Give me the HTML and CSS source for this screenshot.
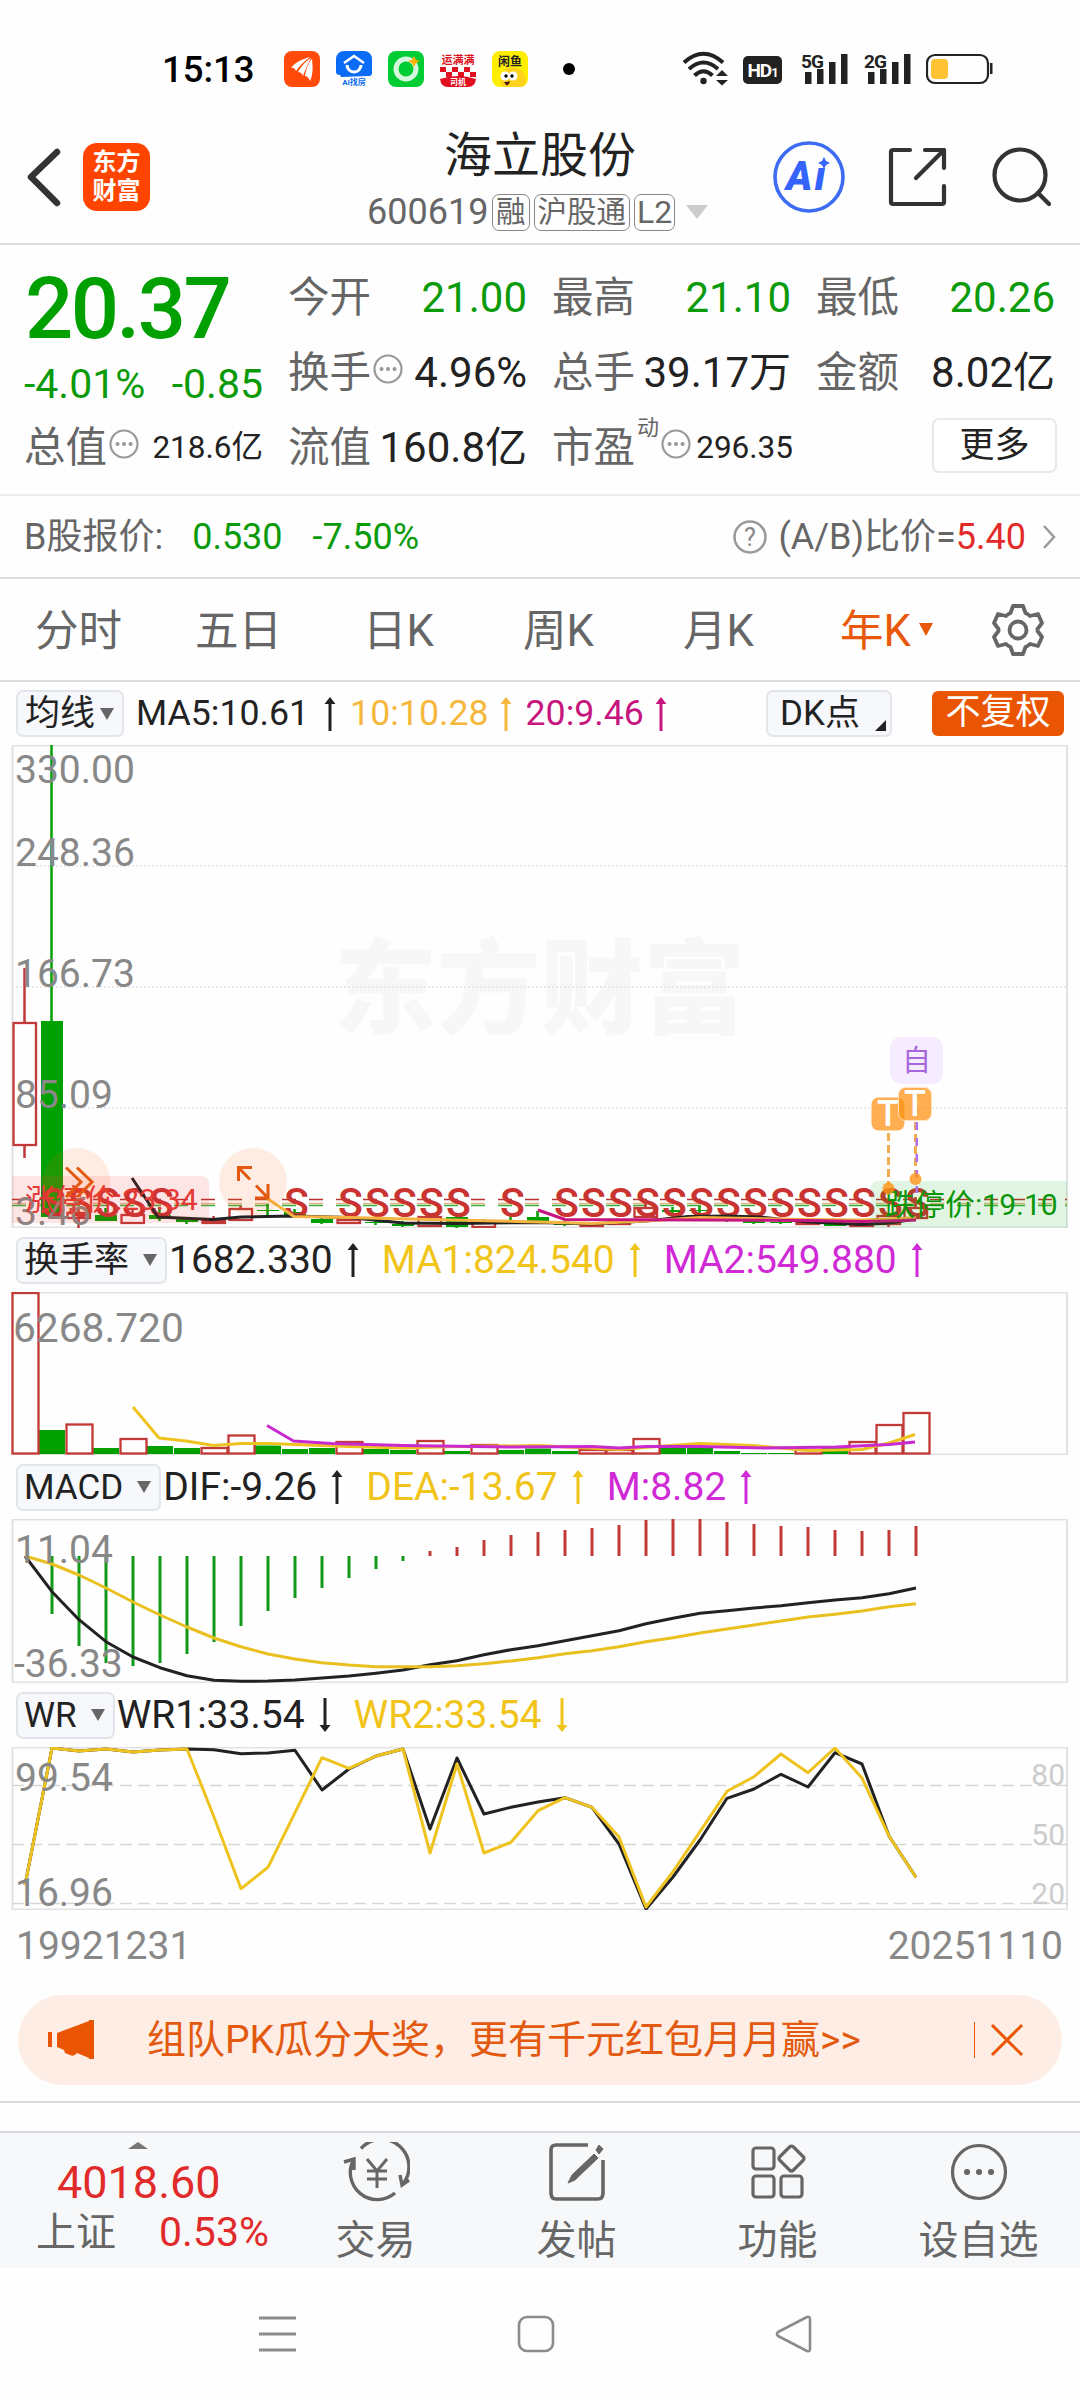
FILE: index.html
```html
<!DOCTYPE html>
<html lang="zh-CN">

<head>
    <meta charset="UTF-8">
    <meta name="viewport" content="width=device-width, initial-scale=1.0">
    <title>海立股份 600619</title>
    <link rel="stylesheet" href="styles.css">
</head>

<body>

    <!-- Status bar -->
    <div class="status-bar">
        <span class="time">15:13</span>
        <div class="app-icons">
            <svg width="36" height="36" viewBox="0 0 36 36">
                <rect width="36" height="36" rx="8" fill="#ff4a0a"/>
                <path d="M7 17C11 11 19 8 26 6C20 11 15 15 12 20C11 17 9 16 7 17Z" fill="#fff"/>
                <path d="M14 21C17 15 22 10 27 7C24 13 21 19 19 25C18 22 16 21 14 21Z" fill="#fff"/>
                <path d="M21 25C22 18 25 11 28 8C29 16 29 24 26 30C25 27 23 25 21 25Z" fill="#fff"/>
            </svg>
            <svg width="36" height="36" viewBox="0 0 36 36">
                <path d="M8 0H28A8 8 0 0 1 36 8V22Q36 25 33 25L5 26L4 24Q0 24 0 21V8A8 8 0 0 1 8 0Z" fill="#0a6cf5"/>
                <path d="M8 12L18 5L28 12" fill="none" stroke="#fff" stroke-width="2.500"/>
                <path d="M11 14A7 7 0 0 0 25 14" fill="none" stroke="#fff" stroke-width="3"/>
                <text x="18" y="34" class="tiny blue">AI找房</text>
            </svg>
            <svg width="36" height="36" viewBox="0 0 36 36">
                <rect width="36" height="36" rx="8" fill="#0c3"/>
                <circle cx="18" cy="18" r="10" fill="none" stroke="#d5f7dd" stroke-width="5"/>
                <path d="M26 5L28 9L32 10L28 12L26 16L24 12L20 10L24 9Z" fill="#ffb000"/>
            </svg>
            <svg width="36" height="36" viewBox="0 0 36 36">
                <text x="18" y="13" class="tiny app-name">运满满</text>
                <path d="M0 16H6V21H0ZM12 16H18V21H12ZM24 16H30V21H24ZM6 21H12V26H6ZM18 21H24V26H18ZM30 21H36V26H30Z" fill="#e01020"/>
                <path d="M0 28Q18 22 36 28Q35 36 28 36H8Q1 36 0 28Z" fill="#e01020"/>
                <text x="18" y="34" class="tiny white">司机</text>
            </svg>
            <svg width="36" height="36" viewBox="0 0 36 36">
                <rect width="36" height="36" rx="8" fill="#ffee00"/>
                <path d="M9 33Q7 20 17 17Q30 14 34 27V29Q34 36 28 36H14Q10 36 9 33Z" fill="#ffd21c"/>
                <text x="18" y="15" class="tiny fish">闲鱼</text>
                <circle cx="13" cy="25" r="4.500" fill="#fff"/>
                <circle cx="21" cy="25" r="4.500" fill="#fff"/>
                <circle cx="14" cy="25" r="1.700"/>
                <circle cx="20" cy="25" r="1.700"/>
                <path d="M12 31Q16 31 18 30Q17 35 14 34Z" fill="#4b1a10"/>
            </svg>
        </div>
        <span class="dot"></span>
        <div class="signals">
            <svg class="wifi" width="46" height="36" viewBox="0 0 46 36" fill="none" stroke="#222" stroke-width="4">
                <path d="M1 11.500Q20.500 -6 40 11.500"/>
                <path d="M6 18Q20.500 5 35 18"/>
                <path d="M11.500 24.500Q20.500 16 29.500 24.500"/>
                <circle cx="20.500" cy="30" r="3.200" fill="#222" stroke="none"/>
                <path d="M33 25L39 19L45 25ZM33 29L39 34.500L45 29Z" fill="#222" stroke="none"/>
            </svg>
            <span class="hd">HD<small>1</small></span>
            <svg width="48" height="36" viewBox="0 0 48 36" fill="#222">
                <text x="0" y="17" class="net">5G</text>
                <rect x="4" y="21" width="6.500" height="12"/>
                <rect x="16" y="18" width="6.500" height="15"/>
                <rect x="28" y="11" width="6.500" height="22"/>
                <rect x="40" y="3" width="6.500" height="30"/>
            </svg>
            <svg width="48" height="36" viewBox="0 0 48 36" fill="#222">
                <text x="0" y="17" class="net">2G</text>
                <rect x="4" y="21" width="6.500" height="12"/>
                <rect x="16" y="18" width="6.500" height="15"/>
                <rect x="28" y="11" width="6.500" height="22"/>
                <rect x="40" y="3" width="6.500" height="30"/>
            </svg>
            <svg width="68" height="36" viewBox="0 0 68 36">
                <rect x="1" y="4" width="61" height="28" rx="8" fill="none" stroke="#222" stroke-width="2.200"/>
                <rect x="5" y="8" width="17" height="20" rx="4" fill="#ffc233"/>
                <rect x="64" y="12" width="2.500" height="11" fill="#222"/>
            </svg>
        </div>
    </div>

    <!-- Title bar -->
    <header class="header">
        <svg class="back" width="36" height="60" viewBox="0 0 36 60" fill="none" stroke="#333" stroke-width="6.500" stroke-linecap="round" stroke-linejoin="round">
            <path d="M31 5L5 30L31 56"/>
        </svg>
        <div class="logo">东方<br>财富</div>
        <div class="title">
            <h1>海立股份</h1>
            <div class="code">
                <span>600619</span>
                <em>融</em><em>沪股通</em><em>L2</em>
                <i class="tri-grey"></i>
            </div>
        </div>
        <div class="header-actions">
            <svg width="72" height="72" viewBox="0 0 72 72">
                <circle cx="36" cy="36" r="34" fill="none" stroke="#3d6bf3" stroke-width="3.600"/>
                <text x="13" y="49" class="ai-text">Aı</text>
                <path d="M51 16L53 20L57 22L53 24L51 28L49 24L45 22L49 20Z" fill="#3464fb"/>
            </svg>
            <svg width="60" height="60" viewBox="0 0 60 60" fill="none" stroke="#333" stroke-width="4.200" stroke-linecap="round" stroke-linejoin="round">
                <path d="M22 3H5Q3 3 3 5V55Q3 57 5 57H54Q56 57 56 55V39"/>
                <path d="M37 3H56V21M56 3L28 31"/>
            </svg>
            <svg width="60" height="60" viewBox="0 0 60 60" fill="none" stroke="#333" stroke-width="4.200" stroke-linecap="round">
                <circle cx="28" cy="28" r="25.500"/>
                <path d="M46 46L57 57"/>
            </svg>
        </div>
    </header>

    <!-- Quote data -->
    <section class="quote">
        <div class="price-box">
            <div class="price">20.37</div>
            <div class="change"><span>-4.01%</span><span>-0.85</span></div>
        </div>
        <div class="cell"><label>今开</label><b class="green">21.00</b></div>
        <div class="cell"><label>最高</label><b class="green">21.10</b></div>
        <div class="cell"><label>最低</label><b class="green">20.26</b></div>
        <div class="cell"><label>换手</label><svg class="more-dot"><use href="#dots"/></svg><b>4.96%</b></div>
        <div class="cell"><label>总手</label><b>39.17万</b></div>
        <div class="cell"><label>金额</label><b>8.02亿</b></div>
        <div class="cell"><label>总值</label><svg class="more-dot"><use href="#dots"/></svg><b class="small">218.6亿</b></div>
        <div class="cell"><label>流值</label><b>160.8亿</b></div>
        <div class="cell"><label>市盈</label><sup>动</sup><svg class="more-dot"><use href="#dots"/></svg><b class="small pe">296.35</b></div>
        <div class="cell"><button class="more-btn">更多</button></div>
    </section>

    <section class="b-share">
        <span>B股报价:</span>
        <span class="green b-price">0.530</span>
        <span class="green b-rate">-7.50%</span>
        <svg class="question" width="34" height="34" viewBox="0 0 34 34">
            <circle cx="17" cy="17" r="15.500" fill="none" stroke="#999" stroke-width="2.500"/>
            <text x="17" y="25.500">?</text>
        </svg>
        <span>(A/B)比价=</span><span class="red">5.40</span>
        <svg class="arrow-right" width="14" height="26" viewBox="0 0 14 26" fill="none" stroke="#999" stroke-width="2.500">
            <path d="M2 2L12 13L2 24"/>
        </svg>
    </section>

    <nav class="tabs">
        <a>分时</a>
        <a>五日</a>
        <a>日K</a>
        <a>周K</a>
        <a>月K</a>
        <a class="active">年K<i></i></a>
        <a class="gear">
            <svg width="54" height="54" viewBox="0 0 54 54" fill="none" stroke="#666" stroke-width="3.800" stroke-linejoin="round">
                <path d="M22 3H32L34.500 10Q37 11 39 13L47 11L51 20L46.500 26V28L51 34L47 43L39 41Q37 43 34.500 44L32 51H22L19.500 44Q17 43 15 41L7 43L3 34L7.500 28V26L3 20L7 11L15 13Q17 11 19.500 10Z"/>
                <circle cx="27" cy="27" r="8.500"/>
            </svg>
        </a>
    </nav>

    <!-- K line chart -->
    <div class="legend legend-main">
        <span class="pill">均线<i></i></span>
        <span class="val black">MA5:10.61</span><svg class="up black"><use href="#arrow"/></svg>
        <span class="val orange">10:10.28</span><svg class="up orange"><use href="#arrow"/></svg>
        <span class="val pink">20:9.46</span><svg class="up pink"><use href="#arrow"/></svg>
        <span class="pill dk">DK点<i></i></span>
        <span class="fuquan">不复权</span>
    </div>
    <svg class="chart" id="kline" width="1080" height="483" viewBox="0 0 1080 483">
        <rect x="12.500" y="0.500" width="1054.500" height="482" class="frame"/>
        <text x="540" y="281" class="watermark">东方财富</text>
        <path d="M12 121H1067M12 242H1067M12 363H1067" class="grid"/>
        <path d="M12 454.500H1067" stroke="#b8302f" class="limit"/>
        <path d="M12 458.500H1067" stroke="#e3b48a" class="limit"/>
        <path d="M12 460.500H1067" stroke="#3cae3c" class="limit"/>
        <g id="candles"></g>
        <g id="marks" class="sell"></g>
        <polyline class="line" stroke="#222" points="132,433 158,472 213,474.500 241,472 293,471 349,472.500 403,478 457,478.500 538,477.500 592,479 646,476 688,471.500 726,471 760,472 808,477 862,479.500 889,478 916,474"/>
        <polyline class="line" stroke="#f5b342" points="265,452 294,471.500 349,472.500 430,474.500 538,477 592,478.500 646,476 700,472.500 808,474.500 862,475 916,473"/>
        <polyline class="line" stroke="#c7157f" points="538,465 565,474.500 700,475 808,475.500 862,476.500 889,476 916,475"/>
        <g class="labels">
            <text x="15" y="38">330.00</text>
            <text x="15" y="121">248.36</text>
            <text x="15" y="242">166.73</text>
            <text x="15" y="363">85.09</text>
            <text x="15" y="480">3.46</text>
        </g>
        <path d="M12 431H201Q209 431 209 439V478H12Z" fill="#f33" fill-opacity="0.120"/>
        <text x="25" y="465" class="limit-text" fill="#e53935">涨停价:23.34</text>
        <path d="M879 436H1067V482.500H871V444Q871 436 879 436Z" fill="#0a0" fill-opacity="0.110"/>
        <text x="885" y="470" class="limit-text" fill="#0a960a">跌停价:19.10</text>
        <circle cx="76.500" cy="437" r="34" fill="#ff6a1a" fill-opacity="0.120"/>
        <circle cx="253" cy="437" r="34" fill="#ff6a1a" fill-opacity="0.120"/>
        <g fill="none" stroke="#e2590f" stroke-width="3">
            <path d="M66 422.500L81 437L66 452M77 422.500L92 437L77 452"/>
            <path d="M252 422.500H238.500V436M238.500 422.500L250 434.500M268 439V453H255M256 440.500L268 453"/>
        </g>
        <g class="tags">
            <rect x="890" y="292" width="53" height="47" rx="11" fill="#f5ecff"/>
            <text x="916.500" y="326" class="zi">自</text>
            <path d="M888.500 388V440M915.500 377V430" stroke="#f2ad50" stroke-width="3" stroke-dasharray="8 4"/>
            <path d="M916.800 345V448" stroke="#b070e8" stroke-width="2.500" stroke-dasharray="8 8"/>
            <circle cx="888.500" cy="443.500" r="6" fill="#ff9317" fill-opacity="0.800"/>
            <circle cx="915.500" cy="434" r="6" fill="#ff9317" fill-opacity="0.800"/>
            <rect x="871.500" y="352.500" width="33" height="33" rx="7" fill="#ff9317" fill-opacity="0.750"/>
            <text x="888" y="381" class="t">T</text>
            <rect x="898.500" y="342.500" width="33" height="33" rx="7" fill="#ff9317" fill-opacity="0.750" stroke="#ffe3bd"/>
            <text x="915" y="371" class="t">T</text>
        </g>
    </svg>

    <!-- Turnover rate -->
    <div class="legend">
        <span class="pill">换手率<i></i></span>
        <span class="val black">1682.330</span><svg class="up black"><use href="#arrow"/></svg>
        <span class="val yellow">MA1:824.540</span><svg class="up yellow"><use href="#arrow"/></svg>
        <span class="val purple">MA2:549.880</span><svg class="up purple"><use href="#arrow"/></svg>
    </div>
    <svg class="chart" width="1080" height="163" viewBox="0 0 1080 163">
        <rect x="12.500" y="0.500" width="1054.500" height="162" class="frame"/>
        <g id="turnover"></g>
        <polyline class="line" stroke="#efc31f" points="133,115 159,146 186,149 213.500,153.500 241,151.500 268,151.500 295,152.500 349,154.500 403,156 457,154.500 540,153.500 566,155 619,157.500 657,154.500 700,151.500 753,153.500 808,158.500 862,157.500 889,151 915,142.500"/>
        <polyline class="line" stroke="#c92ad0" points="267,133.500 293.500,149 331,151.500 403,153.500 510,155 592,154.500 619,156 646,154.500 700,154.500 764,156 836,155 889,152.500 915,150"/>
        <g class="labels big">
            <text x="13" y="50">6268.720</text>
        </g>
    </svg>

    <!-- MACD -->
    <div class="legend">
        <span class="pill">MACD<i></i></span>
        <span class="val black">DIF:-9.26</span><svg class="up black"><use href="#arrow"/></svg>
        <span class="val yellow">DEA:-13.67</span><svg class="up yellow"><use href="#arrow"/></svg>
        <span class="val purple">M:8.82</span><svg class="up purple"><use href="#arrow"/></svg>
    </div>
    <svg class="chart" width="1080" height="164" viewBox="0 0 1080 164">
        <rect x="12.500" y="0.500" width="1054.500" height="163" class="frame"/>
        <g id="macd"></g>
        <polyline class="line" stroke="#222" id="dif"/>
        <polyline class="line" stroke="#e9c01f" id="dea"/>
        <g class="labels">
            <text x="15" y="44">11.04</text>
            <text x="14" y="158">-36.33</text>
        </g>
    </svg>

    <!-- WR -->
    <div class="legend">
        <span class="pill">WR<i></i></span>
        <span class="val black">WR1:33.54</span><svg class="up down black"><use href="#arrow"/></svg>
        <span class="val yellow">WR2:33.54</span><svg class="up down yellow"><use href="#arrow"/></svg>
    </div>
    <svg class="chart" width="1080" height="163" viewBox="0 0 1080 163">
        <rect x="12.500" y="0.500" width="1054.500" height="162" class="frame"/>
        <path d="M12 38.500H1067M12 97.500H1067M12 156.500H1067" stroke="#d6d6d6" stroke-width="1.500" stroke-dasharray="12 6"/>
        <g class="levels">
            <text x="1065" y="38">80</text>
            <text x="1065" y="97.500">50</text>
            <text x="1065" y="156.500">20</text>
        </g>
        <polyline class="line" stroke="#222" id="wr1"/>
        <polyline class="line" stroke="#efc31f" id="wr2"/>
        <g class="labels">
            <text x="15" y="44">99.54</text>
            <text x="15" y="159">16.96</text>
        </g>
    </svg>
    <div class="dates"><span>19921231</span><span>20251110</span></div>

    <!-- Promo banner -->
    <div class="banner">
        <svg width="48" height="40" viewBox="0 0 48 40" fill="#ea5504">
            <path d="M0 12H4V27H0ZM9 13L41 1V0H46V39H41V38L29 33Q26 37 22 35L17 33L16 30L9 27Z"/>
        </svg>
        <span class="banner-text">组队PK瓜分大奖，更有千元红包月月赢&gt;&gt;</span>
        <i class="divider"></i>
        <svg class="close" width="34" height="34" viewBox="0 0 34 34" stroke="#ea5504" stroke-width="3">
            <path d="M2 2L32 32M32 2L2 32"/>
        </svg>
    </div>

    <!-- Bottom bar -->
    <footer class="bottom-bar">
        <div class="index">
            <i class="caret"></i>
            <div class="index-value">4018.60</div>
            <div class="index-row"><span>上证</span><span class="red">0.53%</span></div>
        </div>
        <a>
            <svg width="68" height="60" viewBox="0 0 68 60" fill="none" stroke="#666" stroke-width="3.400">
                <path d="M19 6.500A27 27 0 0 1 60 43M53 51A27 27 0 0 1 12 17M2 20L12 17V28M67 38L60 43L58 33"/>
                <path d="M25 17L35 29L45 17M35 29V46M25 29H45M25 37H45" stroke-width="3"/>
            </svg>
            交易
        </a>
        <a>
            <svg width="58" height="60" viewBox="0 0 58 60" fill="none" stroke="#666" stroke-width="3.600">
                <path d="M40 3H8Q3 3 3 8V51Q3 57 8 57H50Q55 57 55 51V18"/>
                <path d="M51 3L55 7L51 12L48 8ZM46 12L50 16L27 38L20 41L24 33Z" fill="#666" stroke-width="1"/>
            </svg>
            发帖
        </a>
        <a>
            <svg width="56" height="60" viewBox="0 0 56 60" fill="none" stroke="#666" stroke-width="3.200">
                <rect x="3" y="6" width="21" height="21" rx="3"/>
                <rect x="3" y="34" width="21" height="21" rx="3"/>
                <rect x="31" y="34" width="21" height="21" rx="3"/>
                <path d="M39.500 5Q41.500 3 43.500 5L53 14.500Q55 16.500 53 18.500L43.500 28Q41.500 30 39.500 28L30 18.500Q28 16.500 30 14.500Z"/>
            </svg>
            功能
        </a>
        <a>
            <svg width="60" height="60" viewBox="0 0 60 60">
                <circle cx="30" cy="30" r="26.500" fill="none" stroke="#666" stroke-width="3.200"/>
                <path d="M18 30h.1M30 30h.1M42 30h.1" stroke="#666" stroke-width="6" stroke-linecap="round"/>
            </svg>
            设自选
        </a>
    </footer>

    <div class="system-nav">
        <svg width="38" height="38" viewBox="0 0 38 38" stroke="#8c8c8c" stroke-width="3"><path d="M0 3H37M0 19H37M0 35H37"/></svg>
        <svg width="38" height="38" viewBox="0 0 38 38" fill="none" stroke="#8c8c8c" stroke-width="2.600"><rect x="2" y="2" width="34" height="34" rx="8"/></svg>
        <svg width="38" height="38" viewBox="0 0 38 38" fill="none" stroke="#8c8c8c" stroke-width="2.600" stroke-linejoin="round"><path d="M3 17L32 2Q35 1 35 4V34Q35 37 32 36L3 21Q1 19 3 17Z"/></svg>
    </div>

    <!-- Shared symbols -->
    <svg class="symbols">
        <symbol id="dots" viewBox="0 0 30 30">
            <circle cx="15" cy="15" r="13.500" fill="none" stroke="#999" stroke-width="2.200"/>
            <path d="M8.500 15h.1M15 15h.1M21.500 15h.1" stroke="#999" stroke-width="4" stroke-linecap="round"/>
        </symbol>
        <symbol id="arrow" viewBox="0 0 12 34">
            <path d="M6 0L11.500 7H7.500V34H4.500V7H0.500Z" fill="currentColor"/>
        </symbol>
    </svg>

    <script src="charts.js"></script>

</body>

</html>
```
FILE: styles.css
```css
* {
    box-sizing: border-box;
}

body {
    margin: 0;
    width: 1080px;
    height: 2400px;
    background: #fefefe;
    color: #222;
    font-family: Roboto, "Noto Sans CJK SC", sans-serif;
    line-height: 1;
    overflow: hidden;
}

i,
em {
    font-style: normal;
}

svg {
    display: block;
    flex: none;
}

.green {
    color: #0a9a0a;
}

.red {
    color: #e12a2a;
}

/* Status bar */
.status-bar {
    display: flex;
    align-items: center;
    height: 138px;
    padding-left: 162px;
}

.time {
    width: 122px;
    padding-top: 2px;
    font-size: 36.500px;
    font-weight: 500;
    color: #000;
}

.app-icons {
    display: flex;
    gap: 16px;
}

.tiny {
    font-size: 10px;
    font-weight: 700;
    text-anchor: middle;
}

.tiny.blue {
    font-size: 8px;
    fill: #0a6cf5;
}

.tiny.white {
    font-size: 8px;
    fill: #fff;
}

.tiny.app-name {
    font-size: 11px;
    fill: #e01020;
}

.tiny.fish {
    font-size: 12px;
    fill: #222;
}

.dot {
    width: 12px;
    height: 12px;
    margin-left: 35px;
    border-radius: 50%;
    background: #000;
}

.signals {
    display: flex;
    align-items: center;
    margin-left: 108px;
}

.hd {
    display: flex;
    align-items: center;
    justify-content: center;
    width: 39px;
    height: 28px;
    margin: 2px 19px 0 14px;
    border-radius: 5px;
    background: #222;
    color: #fff;
    font-size: 19px;
    font-weight: 700;
    letter-spacing: -1px;
}

.hd small {
    font-size: 13px;
    margin-top: 4px;
}

.net {
    font-size: 19px;
    font-weight: 700;
    letter-spacing: -1px;
}

.signals svg + svg {
    margin-left: 15px;
}

.signals svg:last-child {
    margin-left: 14px;
}

/* Title bar */
.header {
    display: flex;
    height: 107px;
    border-bottom: 2px solid #dcdcdc;
    padding-left: 26px;
}

.back {
    margin-top: 9px;
}

.logo {
    width: 67px;
    height: 68px;
    margin: 5px 0 0 21px;
    padding-top: 5px;
    border-radius: 14px;
    background: #ff4400;
    color: #fff;
    font-size: 24px;
    font-weight: 700;
    line-height: 29px;
    text-align: center;
}

.title {
    width: 360px;
    margin-left: 210px;
    margin-right: 53px;
}

.title h1 {
    margin: -7px 0 0 84px;
    font-size: 48px;
    font-weight: 400;
    line-height: 50px;
}

.code {
    display: flex;
    align-items: center;
    height: 38px;
    margin: 12px 0 0 7px;
    color: #666;
    font-size: 36px;
}

.code span {
    width: 125px;
}

.code em {
    height: 37px;
    padding: 0 3px;
    margin-right: 4px;
    border: 1.500px solid #888;
    border-radius: 7px;
    font-size: 29.500px;
    line-height: 34px;
}

.code em:nth-of-type(3) {
    font-size: 32px;
    padding: 0 2px;
}

.tri-grey {
    margin-left: 7px;
    border: 11px solid transparent;
    border-top: 14px solid #ccc;
    border-bottom: 0;
}

.header-actions {
    display: flex;
    align-items: center;
    height: 78px;
}

.header-actions svg + svg {
    margin-left: 44px;
}

.header-actions svg:first-child {
    margin-right: -1px;
}

.ai-text {
    font-size: 40px;
    font-weight: 900;
    font-style: italic;
    letter-spacing: 2px;
    fill: #3464fb;
}

/* Quote data */
.quote {
    display: grid;
    grid-template-columns: repeat(4, 238px);
    grid-template-rows: repeat(3, 75px);
    column-gap: 26px;
    height: 251px;
    padding: 15px 25px 0;
    border-bottom: 2px solid #ececec;
}

.price-box {
    grid-row: span 2;
}

.price {
    height: 97px;
    line-height: 99px;
    font-size: 85px;
    font-weight: 500;
    letter-spacing: -2.500px;
    color: #00a000;
}

.change {
    display: flex;
    justify-content: space-between;
    height: 53px;
    margin-left: -1px;
    line-height: 55px;
    font-size: 41px;
    color: #0a9a0a;
}

.cell {
    display: flex;
    align-items: center;
    font-size: 42px;
    white-space: nowrap;
}

.cell label {
    margin-left: -1px;
    color: #666;
    font-size: 41.500px;
}

.cell b {
    margin-left: auto;
    font-weight: 400;
}

.cell b.small {
    font-size: 31.500px;
    padding-top: 1px;
}

.cell b.pe {
    margin-right: -2px;
}

.cell sup {
    align-self: flex-start;
    margin: 7px 0 0 2px;
    font-size: 22px;
    color: #666;
}

.more-dot {
    width: 30px;
    height: 30px;
    margin: -8px 0 0 2px;
}

.more-btn {
    width: 125px;
    height: 55px;
    margin: -4px -2px 0 auto;
    padding: 0;
    border: 2px solid #e6e9ec;
    border-radius: 7px;
    background: #fff;
    color: #222;
    font: 35px Roboto, "Noto Sans CJK SC", sans-serif;
    line-height: 48px;
}

.b-share {
    display: flex;
    align-items: center;
    height: 83px;
    padding: 0 24px 0 24px;
    border-bottom: 2px solid #dcdcdc;
    color: #666;
    font-size: 36px;
}

.b-price {
    margin-left: 29px;
}

.b-rate {
    margin-left: 30px;
}

.question {
    margin-left: auto;
    margin-right: 11px;
}

.question text {
    font-size: 25px;
    text-anchor: middle;
    fill: #888;
}

.arrow-right {
    margin-left: 16px;
}

/* Period tabs */
.tabs {
    display: flex;
    height: 103px;
    border-bottom: 2px solid #dcdcdc;
    color: #666;
    font-size: 43.500px;
}

.tabs a {
    display: flex;
    align-items: center;
    justify-content: center;
    width: 160px;
    padding: 5px 3px 0 0;
}

.tabs .active {
    width: 176px;
    color: #e8590c;
}

.tabs .active i {
    margin: -6px 0 0 8px;
    border: 7.500px solid transparent;
    border-top: 13px solid #e8590c;
    border-bottom: 0;
}

.tabs .gear {
    width: 84px;
    padding: 0;
}

/* Indicator rows */
.legend {
    display: flex;
    align-items: center;
    height: 64px;
    padding-left: 16px;
    font-size: 39px;
    white-space: nowrap;
}

.pill {
    display: flex;
    align-items: center;
    height: 47px;
    margin-right: 2px;
    padding: 0 8px 0 6px;
    border: 2px solid #e2e5ea;
    border-radius: 7px;
    background: #f6f8fb;
    color: #222;
    font-size: 35px;
}

.pill i {
    margin-left: 14px;
    border: 7.500px solid transparent;
    border-top: 12.500px solid #666;
    border-bottom: 0;
}

.up {
    width: 12px;
    height: 34px;
    margin: 0 23px 0 14px;
}

.down {
    transform: rotate(180deg);
}

.black {
    color: #222;
}

.yellow {
    color: #f0c419;
}

.orange {
    color: #f5b83d;
}

.pink {
    color: #c7157f;
}

.purple {
    color: #d02ad6;
}

.legend-main {
    height: 63px;
    font-size: 35.700px;
}

.legend-main .pill {
    margin-right: 12px;
    padding-left: 7px;
}

.legend-main .pill i {
    margin-left: 5px;
}

.legend-main .up {
    margin: 0 14px 0 15px;
}

.legend-main .up.orange,
.legend-main .up.pink {
    margin-left: 11px;
}

.legend-main .pill.dk {
    margin-left: auto;
    margin-right: 40px;
    width: 126px;
    padding: 0 4px 0 12px;
}

.legend-main .pill.dk i {
    align-self: flex-end;
    margin: 0 0 4px auto;
    border: 0;
    border-left: 11px solid transparent;
    border-bottom: 11px solid #222;
}

.fuquan {
    width: 132px;
    height: 45px;
    margin-right: 16px;
    border-radius: 6px;
    background: #ea5504;
    color: #fff;
    font-size: 35px;
    line-height: 44px;
    text-align: center;
}

/* Charts */
.frame {
    fill: none;
    stroke: #e2e2e2;
    stroke-width: 2;
}

.grid {
    stroke: #e2e2e2;
    stroke-width: 1.500;
    stroke-dasharray: 2 2;
}

.limit {
    stroke-width: 1.300;
    stroke-dasharray: 14 13;
}

.line {
    fill: none;
    stroke-width: 3;
    stroke-linejoin: round;
}

.labels text {
    font-size: 39px;
    fill: #888;
}

.labels.big text {
    font-size: 40.700px;
}

.levels text {
    font-size: 30px;
    text-anchor: end;
    fill: #ccc;
}

.watermark {
    font-size: 103px;
    font-weight: 900;
    text-anchor: middle;
    fill: #f7f7f7;
}

.sell text {
    font-size: 41px;
    font-weight: 500;
    text-anchor: middle;
    fill: #c93431;
}

.limit-text {
    font-size: 30px;
}

.zi {
    font-size: 29px;
    text-anchor: middle;
    fill: #a866dd;
}

.t {
    font-size: 36px;
    font-weight: 500;
    text-anchor: middle;
    fill: #fff;
}

.dates {
    display: flex;
    justify-content: space-between;
    height: 85px;
    padding: 16px 17px 0 16px;
    color: #888;
    font-size: 39px;
    line-height: 40px;
}

/* Banner */
.banner {
    display: flex;
    align-items: center;
    height: 90px;
    margin: 0 18px;
    padding: 0 38px 0 30px;
    border-radius: 45px;
    background: #fdede4;
}

.banner-text {
    margin-left: 51px;
    font-size: 39px;
    color: #e2590f;
}

.divider {
    width: 1.500px;
    height: 36px;
    margin-left: auto;
    background: #e2590f;
}

.close {
    margin-left: 15px;
}

/* Bottom bar */
.bottom-bar {
    display: flex;
    height: 167px;
    margin-top: 16px;
    border-top: 2px solid #d8dade;
    background: linear-gradient(#fefefe 28px, #d4d7dc 28px, #d4d7dc 30px, #f7f8fa 30px);
    color: #666;
    font-size: 40px;
}

.bottom-bar a {
    display: flex;
    flex-direction: column;
    align-items: center;
    gap: 19px;
    width: 201px;
    padding-top: 39px;
}

.index {
    width: 275px;
    padding-top: 39px;
}

.caret {
    display: block;
    width: 0;
    margin-left: 128px;
    border: 10px solid transparent;
    border-bottom: 7px solid #777;
    border-top: 0;
}

.index-value {
    margin: 11px 0 0 57px;
    font-size: 45px;
    color: #e12a2a;
}

.index-row {
    display: flex;
    align-items: center;
    gap: 43px;
    margin: 7px 0 0 36px;
}

.index-row .red {
    font-size: 41px;
}

.system-nav {
    display: flex;
    align-items: center;
    gap: 220px;
    height: 132px;
    padding-left: 259px;
}

.symbols {
    position: absolute;
    width: 0;
    height: 0;
}
```
FILE: charts.js
```js
// Every yearly bar takes 27px, the first one is centred on x = 25
const STEP = 27;
const FIRST = 25;

const RED = '#c23a38';
const GREEN = '#00a000';

function x(i) {
    return FIRST + STEP * i;
}

function add(parent, html) {
    document.getElementById(parent).insertAdjacentHTML('beforeend', html);
}

// [color, body top, body bottom, high, low]
const candles = [
    ['r', 278, 400, 223, 413], ['g', 276, 472, 0, 472], ['r', 468, 473, 462, 483], ['g', 470, 476, 463, 476],
    ['r', 470, 478, 464, 478], ['g', 470, 474, 462, 476], ['g', 474, 477, 472, 479], ['r', 476, 478, 471, 479],
    ['r', 464, 475, 461, 476], ['g', 465, 466, 459, 470], ['g', 467, 470, 464, 471], ['g', 474, 478, 472, 479],
    ['r', 475, 478, 472, 479], ['g', 477, 478, 474, 480], ['g', 479, 481, 476, 482], ['r', 472, 481, 468, 482],
    ['g', 472, 482, 470, 483], ['r', 477, 482, 474, 483], ['g', 476, 477, 472, 479], ['g', 472, 478, 466, 479],
    ['g', 479, 480, 476, 481], ['r', 480, 481, 477, 482], ['r', 478, 479, 476, 480], ['r', 463, 472, 457, 473],
    ['g', 465, 467, 462, 470], ['g', 465, 466, 461, 470], ['g', 475, 476, 472, 477], ['g', 476, 478, 474, 479],
    ['g', 477, 478, 475, 479], ['r', 478, 479, 473, 480], ['g', 479, 481, 477, 481], ['r', 480, 481, 478, 482],
    ['r', 471, 479, 468, 482], ['r', 463, 473, 452, 474]
];

candles.forEach(([c, top, bottom, high, low], i) => {
    const color = c === 'r' ? RED : GREEN;
    const cx = x(i) - 0.5;
    add('candles', `<path d="M${cx} ${high}V${top}M${cx} ${bottom}V${low}" stroke="${color}" stroke-width="2.500"/>`);
    if (c === 'r') {
        add('candles', `<rect x="${cx - 11}" y="${top}" width="22.500" height="${bottom - top}" fill="#fefefe" stroke="${color}" stroke-width="2.300"/>`);
    } else {
        add('candles', `<rect x="${cx - 10.5}" y="${top}" width="22" height="${bottom - top}" fill="${color}"/>`);
    }
});

// Years with a sell mark
const sells = [1, 2, 3, 4, 5, 10, 12, 13, 14, 15, 16, 18];
for (let i = 20; i < 34; i++) sells.push(i);
sells.forEach(i => add('marks', `<text x="${x(i) + 1.5}" y="472">S</text>`));

// Turnover bars: color and top edge
const turnover = [
    ['r', 1], ['g', 138], ['r', 132.5], ['g', 156], ['r', 147], ['g', 154], ['g', 156], ['r', 156], ['r', 143.5],
    ['g', 153.5], ['g', 157], ['g', 156], ['r', 150], ['g', 157], ['g', 158], ['r', 149], ['g', 159], ['r', 153],
    ['g', 158], ['g', 156.5], ['g', 159], ['r', 158], ['r', 158], ['r', 147], ['g', 154], ['g', 154], ['g', 159],
    ['g', 161], ['g', 161], ['r', 158], ['g', 154.5], ['r', 150], ['r', 133], ['r', 121]
];

turnover.forEach(([c, top], i) => {
    if (c === 'g') {
        add('turnover', `<rect x="${x(i) - 13}" y="${top}" width="26" height="${162 - top}" fill="${GREEN}"/>`);
    }
});
turnover.forEach(([c, top], i) => {
    if (c === 'r') {
        add('turnover', `<rect x="${x(i) - 12.5}" y="${top}" width="26" height="${161.5 - top}" fill="#fefefe" stroke="${RED}" stroke-width="2.300"/>`);
    }
});

// MACD histogram around the zero line
const ZERO = 37;
const macd = [
    37, 95, 127, 144, 147, 144, 135, 123, 107, 92, 79, 69, 59, 50, 42, 32, 28,
    21, 16, 13, 11, 9, 6, 1, 0, 0, 3, 5, 7, 8, 11, 12, 11, 7
];
macd.forEach((y, i) => {
    add('macd', `<path d="M${x(i)} ${ZERO}V${y}" stroke="${y > ZERO ? '#14981a' : RED}" stroke-width="3"/>`);
});

function drawLine(id, values) {
    document.getElementById(id).setAttribute('points', values.map((y, i) => `${x(i)},${y}`).join(' '));
}

drawLine('dif', [
    37, 72.7, 100.7, 122.7, 138, 148.7, 156.7, 161.3, 162.3, 162, 161, 159, 157, 154.3, 151, 145.7, 141.7,
    135.7, 130.7, 126.7, 121.7, 116.7, 111.7, 104.7, 99.3, 94.3, 91.7, 89, 86.7, 83.7, 81, 78.7, 74.7, 69
]);
drawLine('dea', [
    37, 45, 56, 69, 83, 96, 108, 119, 127.7, 135, 140, 143.7, 146, 147.7, 147.7, 147.7, 146.7,
    144.7, 142, 138.7, 134.7, 131.7, 127.7, 122.7, 118.7, 114, 110, 106, 102, 98, 95.3, 92, 87.7, 84.7
]);
drawLine('wr1', [
    138, 1, 4, 2, 5, 3, 2, 2.7, 6.7, 6, 3.3, 43, 22, 9, 2, 82, 11,
    67, 60.3, 55, 50.7, 60.3, 97, 162, 130, 93, 51.3, 42, 27.3, 40, 5.7, 17, 89, 130.3
]);
drawLine('wr2', [
    138, 1, 4, 2, 5, 3, 2, 70, 141.7, 120.3, 65.7, 10.7, 21.3, 9, 2, 106, 17,
    106, 95.3, 63.7, 50.7, 60.3, 90, 160, 124.7, 84.7, 44.3, 29.7, 7, 25.7, 1, 31, 89, 130.3
]);
```
